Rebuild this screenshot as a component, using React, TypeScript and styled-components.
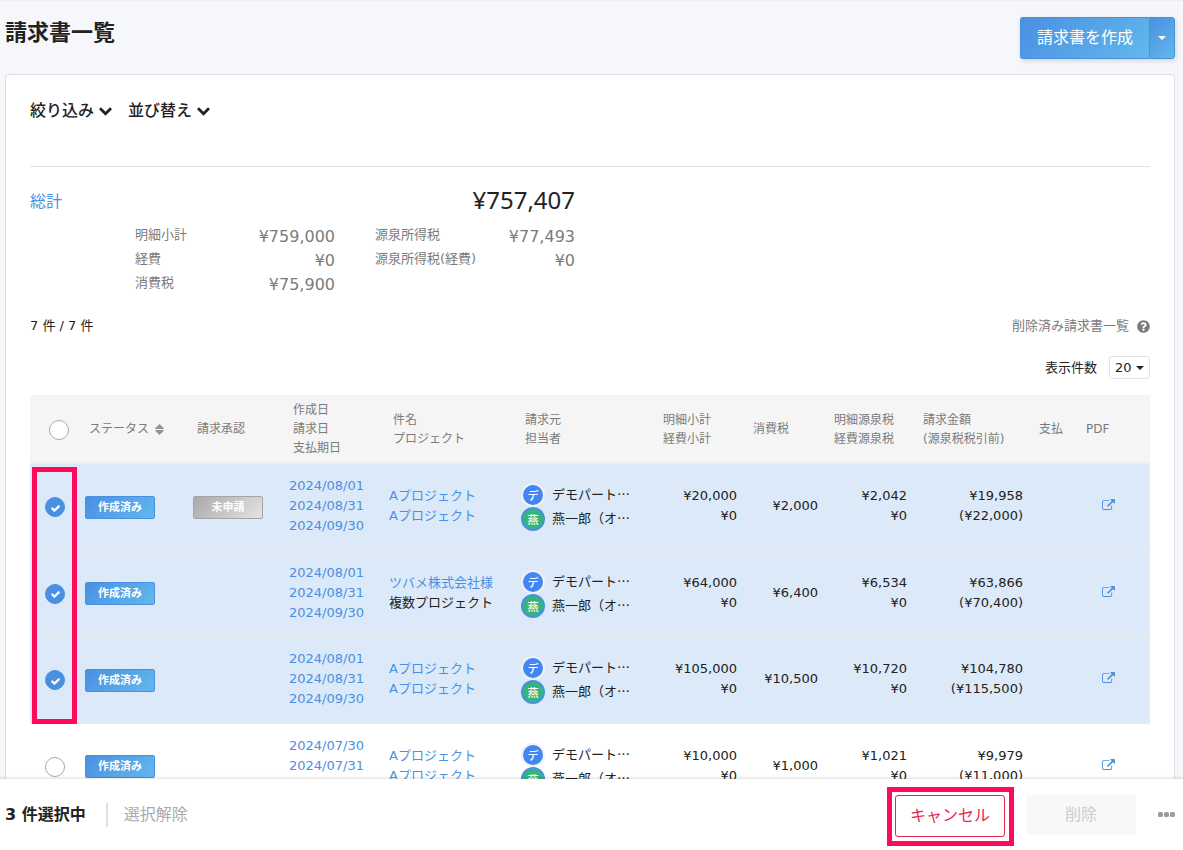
import React, { useState } from "react";
import styled, { createGlobalStyle, css } from "styled-components";
import { FaQuestionCircle } from "react-icons/fa";

const color = {
  text: "#222",
  muted: "#7b7b7b",
  link: "#4a90e2",
  line: "#dbe0e6",
  danger: "#e8274f",
  mark: "#ff0a5b",
};

const GlobalStyle = createGlobalStyle`
  *, *::before, *::after { box-sizing: border-box; }
  body {
    margin: 0;
    background: #f5f7fb;
    color: ${color.text};
    font: 13px/20px "DejaVu Sans", "Noto Sans CJK JP", sans-serif;
  }
  button, input, select { font: inherit; color: inherit; margin: 0; }
  button { cursor: pointer; padding: 0; }
  a { color: ${color.link}; text-decoration: none; }
  svg { display: block; flex: none; }
`;

const Page = styled.div`
  display: flex;
  flex-direction: column;
  height: 100vh;
  border-top: 1px solid #eff0f4;
`;

const Scroller = styled.main`
  flex: 1;
  min-height: 0;
  overflow: auto;
  scrollbar-width: none;
  padding: 16px 8px 0 5px;
`;

const TitleBar = styled.header`
  display: flex;
  justify-content: space-between;
  align-items: flex-start;
`;

const Title = styled.h1`
  margin: 0;
  font-size: 22px;
  line-height: 32px;
  font-weight: 700;
`;

const SplitButton = styled.div`
  display: flex;
  height: 42px;
  border-radius: 3px;
  box-shadow: 1px 2px 5px rgba(0, 0, 0, 0.14);
`;

const CreateButton = styled.button`
  padding: 0 16px;
  border: 1px solid ${color.link};
  border-right: 0;
  border-radius: 3px 0 0 3px;
  background: linear-gradient(135deg, #4a90e2, #62b8ec);
  color: #fff;
  font-size: 16px;
`;

const CreateMenuButton = styled.button`
  display: grid;
  place-items: center;
  width: 26px;
  border: 1px solid ${color.link};
  border-radius: 0 3px 3px 0;
  background: linear-gradient(135deg, #4a90e2, #62b8ec);
  color: #fff;
`;

const Card = styled.section`
  margin-top: 15px;
  padding: 24px 24px 40px;
  border: 1px solid #dcdfe3;
  border-radius: 4px;
  background: #fff;
`;

const Filters = styled.div`
  display: flex;
  gap: 16px;
  height: 68px;
  align-items: flex-start;
  border-bottom: 1px solid ${color.line};
`;

const FilterButton = styled.button`
  display: flex;
  align-items: center;
  gap: 5px;
  border: 0;
  background: none;
  font-size: 16px;
  line-height: 24px;
  font-weight: 500;
`;

const Summary = styled.section`
  display: grid;
  grid-template-columns: 105px 200px 40px 200px;
  padding-top: 15px;
  line-height: 24px;
  color: ${color.muted};
`;

const SummaryTitle = styled.h2`
  margin: 0;
  padding-top: 2px;
  font-size: 16px;
  line-height: 36px;
  font-weight: 400;
  color: ${color.link};
`;

const GrandTotal = styled.div`
  grid-column: 2 / 5;
  text-align: right;
  font: 24px/36px "Noto Sans", "Noto Sans CJK JP", sans-serif;
  color: ${color.text};
`;

const Breakdown = styled.dl<{ $column: number }>`
  grid-column: ${(p) => p.$column};
  display: grid;
  grid-template-columns: auto 1fr;
  align-content: start;
  margin: 3px 0 0;
`;

const BreakdownLabel = styled.dt`
  font-size: 13px;
`;

const BreakdownValue = styled.dd`
  margin: 0;
  padding-top: 2px;
  height: 24px;
  text-align: right;
  font-size: 16px;
`;

const CountRow = styled.div`
  display: flex;
  justify-content: space-between;
  align-items: center;
  margin-top: 21px;
`;

const DeletedLink = styled.a`
  display: flex;
  align-items: center;
  gap: 8px;
  color: ${color.muted};
`;

const PageSizeRow = styled.div`
  display: flex;
  justify-content: flex-end;
  align-items: center;
  gap: 12px;
  margin: 20px 0 16px;
`;

const SelectBox = styled.span`
  display: inline-grid;
  align-items: center;
  width: 41px;

  > * { grid-area: 1 / 1; }
  > svg { justify-self: end; margin-right: 6px; pointer-events: none; }
`;

const Select = styled.select`
  appearance: none;
  width: 100%;
  height: 23px;
  padding: 0 0 0 5px;
  border: 1px solid #e3e3e3;
  border-radius: 3px;
  background: #fff;
  line-height: 20px;
`;

const TableArea = styled.div`
  position: relative;
`;

const RowsMark = styled.div`
  position: absolute;
  top: 72px;
  left: 2px;
  width: 45px;
  height: 257px;
  border: 5px solid ${color.mark};
  pointer-events: none;
`;

const Table = styled.table`
  width: 100%;
  table-layout: fixed;
  border-collapse: separate;
  border-spacing: 0;
`;

const HeadCell = styled.th<{ $inset?: number }>`
  height: 69px;
  padding: 2px 0 0 ${(p) => p.$inset ?? 8}px;
  border-bottom: 2px solid #eee;
  background: #f5f5f5;
  color: ${color.muted};
  font-size: 12px;
  line-height: 19px;
  font-weight: 400;
  text-align: left;
  white-space: pre-line;
`;

const HeadLabel = styled.span`
  display: flex;
  align-items: center;
  gap: 6px;
`;

const Cell = styled.td<{ $inset?: number; $align?: "left" | "right"; $bottom?: number }>`
  height: 87px;
  padding: 0 8px ${(p) => p.$bottom ?? 2}px ${(p) => p.$inset ?? 4}px;
  border-bottom: 1px solid #eaecee;
  text-align: ${(p) => p.$align ?? "left"};
  white-space: nowrap;
`;

const Row = styled.tr<{ $selected: boolean }>`
  background: ${(p) => (p.$selected ? "#dce9f9" : "#fff")};

  &:nth-child(even) > ${Cell} { height: 86px; }
`;

const Stack = styled.div`
  display: flex;
  flex-direction: column;
`;

const CheckWrap = styled.label`
  display: grid;
  place-items: center;
  width: 20px;
  height: 20px;
  color: #fff;

  > * { grid-area: 1 / 1; }
  > svg { margin-top: 2px; pointer-events: none; }
`;

const CheckInput = styled.input`
  appearance: none;
  width: 20px;
  height: 20px;
  border: 1px solid #aaa;
  border-radius: 50%;
  background: #fff;

  &:checked {
    border-color: ${color.link};
    background: ${color.link};
  }
`;

const Badge = styled.button<{ $pending?: boolean }>`
  display: block;
  width: 70px;
  height: 23px;
  padding-top: 1px;
  border: 1px solid ${color.link};
  border-radius: 2px;
  background: linear-gradient(135deg, #4a90e2, #62b8ec);
  color: #fff;
  font-size: 11px;
  line-height: 20px;
  font-weight: 700;

  ${(p) =>
    p.$pending &&
    css`
      border-color: #a5a5a5;
      background: linear-gradient(135deg, #a9a9a9, #e4e4e4);
    `}
`;

const Person = styled.div`
  display: flex;
  align-items: center;
  gap: 7px;
  height: 24px;
`;

const Avatar = styled.span<{ $member?: boolean }>`
  display: grid;
  place-items: center;
  width: 24px;
  height: 24px;
  border: 2px solid ${(p) => (p.$member ? color.link : "#f0f1f4")};
  border-radius: 50%;
  background: ${(p) => (p.$member ? "#34b67a" : "#4285f4")};
  color: #fff;
  font: 500 11px/20px "Noto Sans CJK JP", sans-serif;
`;

const PersonName = styled.span`
  padding-bottom: 2px;
  font-family: "Noto Sans CJK JP", sans-serif;
`;

const ActionBar = styled.footer`
  position: relative;
  display: flex;
  align-items: center;
  height: 71px;
  padding: 0 8px 0 5px;
  background: #fff;
  box-shadow: 0 -1px 3px rgba(0, 0, 0, 0.14);
  font-size: 16px;
`;

const SelectedCount = styled.strong`
  padding-right: 20px;
  border-right: 2px solid ${color.line};
  line-height: 24px;
  font-weight: 700;
`;

const ClearButton = styled.button`
  margin: 0 auto 0 16px;
  border: 0;
  background: none;
  color: #aaa;
`;

const CancelMark = styled.span`
  display: block;
  margin: 4px 12px 0 0;
  padding: 3px 4px 4px 3px;
  border: 5px solid ${color.mark};
`;

const ActionButton = styled.button<{ $muted?: boolean }>`
  display: block;
  width: 110px;
  height: ${(p) => (p.$muted ? 40 : 42)}px;
  border: 1px solid ${(p) => (p.$muted ? "#f8f8f8" : color.danger)};
  border-radius: 3px;
  background: ${(p) => (p.$muted ? "#f8f8f8" : "#fff")};
  color: ${(p) => (p.$muted ? "#ccc" : color.danger)};
`;

const MoreButton = styled.button`
  margin-left: 22px;
  border: 0;
  background: none;
  color: #999da3;
`;

const Caret = () => (
  <svg width="8" height="4" viewBox="0 0 8 4" fill="currentColor" aria-hidden="true">
    <path d="M0 0h8L4 4z" />
  </svg>
);

const Chevron = () => (
  <svg width="13" height="9" viewBox="0 0 13 9" fill="none" stroke="currentColor" strokeWidth="2.8" aria-hidden="true">
    <path d="M1 1.300l5.500 5.400L12 1.300" />
  </svg>
);

const Check = () => (
  <svg width="9" height="7" viewBox="121 306 1550 1216" fill="currentColor" aria-hidden="true">
    <path d="M1671 566q0 40-28 68l-724 724-136 136q-28 28-68 28t-68-28l-136-136-362-362q-28-28-28-68t28-68l136-136q28-28 68-28t68 28l294 295 656-657q28-28 68-28t68 28l136 136q28 28 28 68z" />
  </svg>
);

const SortIcon = () => (
  <svg width="9" height="11" viewBox="0 0 9 11" fill="#8f9499" aria-hidden="true">
    <path d="M4.500 0L8.800 4.200Q9 5 8.300 5H.7Q0 5 .2 4.200zM4.500 11L8.800 6.800Q9 6 8.300 6H.7Q0 6 .2 6.800z" />
  </svg>
);

const Dots = () => (
  <svg width="17" height="5" viewBox="0 0 17 5" fill="currentColor" aria-hidden="true">
    <rect width="5" height="5" rx="1.5" />
    <rect x="6" width="5" height="5" rx="1.5" />
    <rect x="12" width="5" height="5" rx="1.5" />
  </svg>
);

const ExternalIcon = () => (
  <svg width="13" height="11" viewBox="0 0 1792 1536" fill="currentColor" aria-hidden="true">
    <path d="M1408 928v320q0 119-84.5 203.5t-203.5 84.5h-832q-119 0-203.5-84.5t-84.5-203.5v-832q0-119 84.5-203.5t203.5-84.5h704q14 0 23 9t9 23v64q0 14-9 23t-23 9h-704q-66 0-113 47t-47 113v832q0 66 47 113t113 47h832q66 0 113-47t47-113v-320q0-14 9-23t23-9h64q14 0 23 9t9 23zm384-864v512q0 26-19 45t-45 19-45-19l-176-176-652 652q-10 10-23 10t-23-10l-114-114q-10-10-10-23t10-23l652-652-176-176q-19-19-19-45t19-45 45-19h512q26 0 45 19t19 45z" />
  </svg>
);

type CheckProps = { label: string; checked: boolean; onChange: () => void };

const RoundCheck = ({ label, checked, onChange }: CheckProps) => (
  <CheckWrap>
    <CheckInput type="checkbox" aria-label={label} checked={checked} onChange={onChange} />
    {checked && <Check />}
  </CheckWrap>
);

type Invoice = {
  pending?: boolean;
  dates: string[];
  names: string[];
  subtotal: string;
  tax: string;
  withholding: string;
  amount: string;
  gross: string;
};

const invoices: Invoice[] = [
  {
    pending: true,
    dates: ["2024/08/01", "2024/08/31", "2024/09/30"],
    names: ["Aプロジェクト", "Aプロジェクト"],
    subtotal: "¥20,000",
    tax: "¥2,000",
    withholding: "¥2,042",
    amount: "¥19,958",
    gross: "(¥22,000)",
  },
  {
    dates: ["2024/08/01", "2024/08/31", "2024/09/30"],
    names: ["ツバメ株式会社様", "複数プロジェクト"],
    subtotal: "¥64,000",
    tax: "¥6,400",
    withholding: "¥6,534",
    amount: "¥63,866",
    gross: "(¥70,400)",
  },
  {
    dates: ["2024/08/01", "2024/08/31", "2024/09/30"],
    names: ["Aプロジェクト", "Aプロジェクト"],
    subtotal: "¥105,000",
    tax: "¥10,500",
    withholding: "¥10,720",
    amount: "¥104,780",
    gross: "(¥115,500)",
  },
  {
    dates: ["2024/07/30", "2024/07/31", "2024/08/31"],
    names: ["Aプロジェクト", "Aプロジェクト"],
    subtotal: "¥10,000",
    tax: "¥1,000",
    withholding: "¥1,021",
    amount: "¥9,979",
    gross: "(¥11,000)",
  },
];

const columnWidths = [51, 108, 96, 100, undefined, 138, 90, 81, 89, 116, 47, 72];

export default function App() {
  const [selected, setSelected] = useState([true, true, true, false]);
  const toggle = (index: number) =>
    setSelected((all) => all.map((on, i) => (i === index ? !on : on)));
  const allOn = selected.every(Boolean);

  return (
    <Page lang="ja">
      <GlobalStyle />
      <Scroller>
        <TitleBar>
          <Title>請求書一覧</Title>
          <SplitButton>
            <CreateButton type="button">請求書を作成</CreateButton>
            <CreateMenuButton type="button" aria-label="その他の作成方法">
              <Caret />
            </CreateMenuButton>
          </SplitButton>
        </TitleBar>

        <Card>
          <Filters>
            <FilterButton type="button">
              絞り込み
              <Chevron />
            </FilterButton>
            <FilterButton type="button">
              並び替え
              <Chevron />
            </FilterButton>
          </Filters>

          <Summary>
            <SummaryTitle>総計</SummaryTitle>
            <GrandTotal>¥757,407</GrandTotal>
            <Breakdown $column={2}>
              <BreakdownLabel>明細小計</BreakdownLabel>
              <BreakdownValue>¥759,000</BreakdownValue>
              <BreakdownLabel>経費</BreakdownLabel>
              <BreakdownValue>¥0</BreakdownValue>
              <BreakdownLabel>消費税</BreakdownLabel>
              <BreakdownValue>¥75,900</BreakdownValue>
            </Breakdown>
            <Breakdown $column={4}>
              <BreakdownLabel>源泉所得税</BreakdownLabel>
              <BreakdownValue>¥77,493</BreakdownValue>
              <BreakdownLabel>源泉所得税(経費)</BreakdownLabel>
              <BreakdownValue>¥0</BreakdownValue>
            </Breakdown>
          </Summary>

          <CountRow>
            <span>7 件 / 7 件</span>
            <DeletedLink href="#deleted">
              削除済み請求書一覧
              <FaQuestionCircle size={13} />
            </DeletedLink>
          </CountRow>

          <PageSizeRow>
            <label htmlFor="page-size">表示件数</label>
            <SelectBox>
              <Select id="page-size" defaultValue="20">
                <option>20</option>
                <option>50</option>
              </Select>
              <Caret />
            </SelectBox>
          </PageSizeRow>

          <TableArea>
            <Table>
              <colgroup>
                {columnWidths.map((width, i) => (
                  <col key={i} width={width} />
                ))}
              </colgroup>
              <thead>
                <tr>
                  <HeadCell $inset={19}>
                    <RoundCheck
                      label="すべて選択"
                      checked={allOn}
                      onChange={() => setSelected((all) => all.map(() => !allOn))}
                    />
                  </HeadCell>
                  <HeadCell>
                    <HeadLabel>
                      ステータス
                      <SortIcon />
                    </HeadLabel>
                  </HeadCell>
                  <HeadCell>請求承認</HeadCell>
                  <HeadCell>{"作成日\n請求日\n支払期日"}</HeadCell>
                  <HeadCell>{"件名\nプロジェクト"}</HeadCell>
                  <HeadCell>{"請求元\n担当者"}</HeadCell>
                  <HeadCell>{"明細小計\n経費小計"}</HeadCell>
                  <HeadCell>消費税</HeadCell>
                  <HeadCell>{"明細源泉税\n経費源泉税"}</HeadCell>
                  <HeadCell>{"請求金額\n(源泉税税引前)"}</HeadCell>
                  <HeadCell>支払</HeadCell>
                  <HeadCell>PDF</HeadCell>
                </tr>
              </thead>
              <tbody>
                {invoices.map((row, i) => (
                  <Row key={i} $selected={selected[i]}>
                    <Cell $inset={15} $bottom={0}>
                      <RoundCheck
                        label={`${row.names[0]}を選択`}
                        checked={selected[i]}
                        onChange={() => toggle(i)}
                      />
                    </Cell>
                    <Cell $bottom={0}>
                      <Badge type="button">作成済み</Badge>
                    </Cell>
                    <Cell $bottom={0}>
                      {row.pending && (
                        <Badge type="button" $pending>
                          未申請
                        </Badge>
                      )}
                    </Cell>
                    <Cell>
                      <Stack>
                        {row.dates.map((date) => (
                          <a key={date} href="#invoice">
                            {date}
                          </a>
                        ))}
                      </Stack>
                    </Cell>
                    <Cell>
                      <Stack>
                        {row.names.map((name, n) =>
                          name.startsWith("複数") ? (
                            <span key={n}>{name}</span>
                          ) : (
                            <a key={n} href="#project">
                              {name}
                            </a>
                          )
                        )}
                      </Stack>
                    </Cell>
                    <Cell $bottom={0}>
                      <Person>
                        <Avatar>デ</Avatar>
                        <PersonName>デモパート…</PersonName>
                      </Person>
                      <Person>
                        <Avatar $member>燕</Avatar>
                        <PersonName>燕一郎（オ…</PersonName>
                      </Person>
                    </Cell>
                    <Cell $align="right">
                      <Stack>
                        <span>{row.subtotal}</span>
                        <span>¥0</span>
                      </Stack>
                    </Cell>
                    <Cell $align="right">{row.tax}</Cell>
                    <Cell $align="right">
                      <Stack>
                        <span>{row.withholding}</span>
                        <span>¥0</span>
                      </Stack>
                    </Cell>
                    <Cell $align="right">
                      <Stack>
                        <span>{row.amount}</span>
                        <span>{row.gross}</span>
                      </Stack>
                    </Cell>
                    <Cell />
                    <Cell $inset={24} $bottom={5}>
                      <a href="#pdf" aria-label="PDFを開く">
                        <ExternalIcon />
                      </a>
                    </Cell>
                  </Row>
                ))}
              </tbody>
            </Table>
            <RowsMark />
          </TableArea>
        </Card>
      </Scroller>

      <ActionBar>
        <SelectedCount>{selected.filter(Boolean).length} 件選択中</SelectedCount>
        <ClearButton type="button" onClick={() => setSelected((all) => all.map(() => false))}>
          選択解除
        </ClearButton>
        <CancelMark>
          <ActionButton type="button">キャンセル</ActionButton>
        </CancelMark>
        <ActionButton type="button" $muted>
          削除
        </ActionButton>
        <MoreButton type="button" aria-label="その他">
          <Dots />
        </MoreButton>
      </ActionBar>
    </Page>
  );
}
